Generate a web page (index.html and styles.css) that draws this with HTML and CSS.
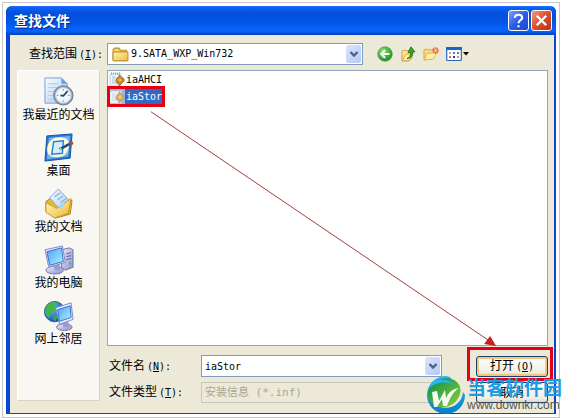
FILE: index.html
```html
<!DOCTYPE html>
<html lang="zh-CN">
<head>
    <meta charset="UTF-8">
    <meta name="viewport" content="width=device-width, initial-scale=1.0">
    <title>查找文件</title>
    <link rel="stylesheet" href="styles.css">
</head>
<body>
    <svg class="defs" width="0" height="0" aria-hidden="true">
        <defs>
            <linearGradient id="g-folder" x1="0" y1="0" x2="1" y2="1">
                <stop offset="0" stop-color="#fff6b8"/><stop offset="1" stop-color="#edb93c"/>
            </linearGradient>
            <linearGradient id="g-screen" x1="0" y1="0" x2="1" y2="1">
                <stop offset="0" stop-color="#4ba0f5"/><stop offset="1" stop-color="#b4f1ff"/>
            </linearGradient>
            <linearGradient id="g-paper" x1="0" y1="0" x2="1" y2="1">
                <stop offset="0" stop-color="#f8fcff"/><stop offset="1" stop-color="#a9cdf4"/>
            </linearGradient>
            <linearGradient id="g-case" x1="0" y1="0" x2="1" y2="1">
                <stop offset="0" stop-color="#eeeefc"/><stop offset="1" stop-color="#8c8cc8"/>
            </linearGradient>
            <radialGradient id="g-green" cx=".35" cy=".3" r=".8">
                <stop offset="0" stop-color="#8be070"/><stop offset="1" stop-color="#168a16"/>
            </radialGradient>
            <radialGradient id="g-globe" cx=".35" cy=".3" r=".8">
                <stop offset="0" stop-color="#6fc0ff"/><stop offset="1" stop-color="#0a3eb0"/>
            </radialGradient>
            <linearGradient id="g-logo" x1="0" y1="0" x2="0" y2="1">
                <stop offset="0" stop-color="#26b6ee"/><stop offset="1" stop-color="#087fc8"/>
            </linearGradient>
            <linearGradient id="g-leaf" x1="0" y1="0" x2="1" y2="1">
                <stop offset="0" stop-color="#078c45"/><stop offset="1" stop-color="#8fcf3c"/>
            </linearGradient>
            <symbol id="inf" viewBox="0 0 16 16">
                <path d="M1 2h11v12H1z" fill="#eef5fb" stroke="#c3d2e2"/>
                <path d="M2 1.500h1m1 0h1m1 0h1m1 0h1m1 0h1" stroke="#b79a55" stroke-width="2"/>
                <path d="M3 5h4M3 7h3M3 9h4M3 11h5" stroke="#a9c4dd"/>
                <path d="M10 3v2l-2 1-1 2 1 3 2 1v2l5-5V7z" fill="#c98b28" stroke="#9a7430"/>
                <circle cx="11" cy="8" r="1.500" fill="#f0c050"/>
            </symbol>
            <symbol id="chevron" viewBox="0 0 10 10">
                <path d="M1.500 3 5 6.500 8.500 3" fill="none" stroke="#4d6185" stroke-width="2.400"/>
            </symbol>
        </defs>
    </svg>

    <div class="page">
        <div class="dialog">
            <header class="titlebar">
                <h1>查找文件</h1>
                <button class="title-btn" aria-label="帮助">
                    <svg viewBox="0 0 18 18"><path d="M5.500 6.500C5.500 2.500 12.500 2.500 12.500 6.500 12.500 9 9 8.500 9 11.500M9 13.500v2" fill="none" stroke="#fff" stroke-width="2"/></svg>
                </button>
                <button class="title-btn close" aria-label="关闭">
                    <svg viewBox="0 0 18 18"><path d="M4.500 4.500l9 9m0-9l-9 9" stroke="#fff" stroke-width="2.200"/></svg>
                </button>
            </header>

            <div class="content">
                <div class="toolbar">
                    <label for="look-in">查找范围<span class="key">(<u>I</u>):</span></label>
                    <div class="combo look-in">
                        <svg class="combo-icon" viewBox="0 0 16 16">
                            <path d="M1 13.500V3.500L2.500 2h4L8 4h5.500v2" fill="#f6d66b" stroke="#b98a22"/>
                            <path d="M1 13.500V6.500L2.500 5.500h12l.500 1v7l-1 .500H2z" fill="url(#g-folder)" stroke="#c1932b"/>
                        </svg>
                        <select id="look-in"><option>9.SATA_WXP_Win732</option></select>
                        <span class="arrow"><svg><use href="#chevron"/></svg></span>
                    </div>
                    <div class="tools">
                        <button aria-label="后退">
                            <svg viewBox="0 0 16 16"><circle cx="8" cy="8" r="7.300" fill="url(#g-green)" stroke="#3d9b35" stroke-width=".6"/><path d="M12.500 8H4.500M8 4.300 4.300 8 8 11.700" fill="none" stroke="#fff" stroke-width="2"/></svg>
                        </button>
                        <button aria-label="向上">
                            <svg viewBox="0 0 16 16"><path d="M2 15V5l3-1 1 1 6-1v8L9 15z" fill="url(#g-folder)" stroke="#cfa23a"/><path d="M2.500 15 5 9l8-2-3 7z" fill="#fff0a0" stroke="#d0a43c" stroke-width=".7"/><path d="M7 12.500c3-1 3.500-3 3.500-6H8L11 .800 15 6h-2.300c0 4-1 6-5.700 6.500z" fill="#35a52b" stroke="#176e18" stroke-width=".8"/></svg>
                        </button>
                        <button aria-label="新建文件夹">
                            <svg viewBox="0 0 16 16"><path d="M1 14V4l2-1 3 1 5-.500V7L9 13z" fill="#f7dc80" stroke="#d5a846"/><path d="M1.500 14 4 7.500l10-1L10.500 13z" fill="#fff0a9" stroke="#d9ad4b" stroke-width=".8"/><path d="M12.500 1v7M9 4.500h7M10 2l5 5m0-5-5 5" stroke="#ed7443" stroke-width="1.300"/><circle cx="12.500" cy="4.500" r="1.200" fill="#ffd2a0"/></svg>
                        </button>
                        <button class="views" aria-label="查看">
                            <svg viewBox="0 0 16 16"><rect x=".7" y="1.500" width="14.600" height="13" rx="1" fill="#fff" stroke="#2865b8" stroke-width="1.200"/><path d="M0 1h16v3H0z" fill="#1765cf"/><path d="M3 6h2v2H3z" fill="#aaa"/><path d="M7 6h2v2H7z" fill="#4b83c5"/><path d="M11 6h2v2h-2z" fill="#339957"/><path d="M3 10h2v2H3z" fill="#e66a42"/><path d="M7 10h2v2H7z" fill="#1c419f"/><path d="M11 10h2v2h-2z" fill="#d49b39"/></svg>
                            <svg class="caret" viewBox="0 0 6 4"><path d="M0 0h6L3 3.500z"/></svg>
                        </button>
                    </div>
                </div>

                <div class="main">
                    <nav class="places">
                        <a href="#">
                            <svg viewBox="0 0 32 32">
                                <path d="M2 2h17l6 6v20H2z" fill="url(#g-paper)" stroke="#769fd6"/>
                                <path d="M19 2v6h6z" fill="#5e9be8"/>
                                <path d="M5 8h11M5 12h13M5 16h9M5 20h7M5 24h8" stroke="#a8caef"/>
                                <circle cx="21" cy="20" r="10" fill="#9ba6b7" stroke="#68758b"/>
                                <circle cx="21" cy="20" r="7.800" fill="#eaf8ff" stroke="#d7dce3"/>
                                <path d="M21 13.500v1.500M21 25v1.500M14.500 20H16M26 20h1.500" stroke="#6686a0"/>
                                <path d="M25.500 15.500 21 20.500l-3-.500" fill="none" stroke="#24435c" stroke-width="1.800"/>
                            </svg>
                            我最近的文档
                        </a>
                        <a href="#">
                            <svg viewBox="0 0 32 32">
                                <path d="M4 4 30 2l-2 25-26 3z" fill="#2877d3" stroke="#1551a4"/>
                                <path d="M6 6 28 4l-2 21-22 3z" fill="#6db7f2"/>
                                <path d="M9 8c5-4 15-3 17 1 2 5 0 12-4 15-6 4-15 2-17-2-2-5 0-11 4-14z" fill="#fff8d8"/>
                                <path d="M11 10 21 9l-1 13-11 1z" fill="#d1f0ff" stroke="#2585cf" stroke-width="1.500"/>
                                <path d="M17 18 28 12" stroke="#194c86" stroke-width="2.500"/>
                                <path d="m15.500 19 3-3 1 2z" fill="#f5dfac"/><circle cx="29" cy="11.500" r="2.200" fill="#b84935"/>
                            </svg>
                            桌面
                        </a>
                        <a href="#">
                            <svg viewBox="0 0 32 32">
                                <path d="m3 14 7-5 20 4-2 14-15 4L3 24z" fill="#e8b733" stroke="#b78422"/>
                                <path d="m7 10 9-9 12 13-9 10z" fill="url(#g-paper)" stroke="#75aedd"/>
                                <path d="m12 9 6-4m-3 7 6-4m-3 7 6-4" stroke="#8ab8e3" stroke-width="1.500"/>
                                <path d="m3 15 11 6L29 11l-3 15-14 5L3 25z" fill="url(#g-folder)" stroke="#c9962c"/>
                                <path d="m15 19 8-5-4 8z" fill="#9ed8f6"/>
                            </svg>
                            我的文档
                        </a>
                        <a href="#">
                            <svg viewBox="0 0 32 32">
                                <path d="m19 6 8-2 4 2v18l-8 3-4-3z" fill="url(#g-case)" stroke="#6f6fac"/>
                                <path d="m24 10 5-1m-5 4 5-1m-5 4 5-1" stroke="#5a5fa0"/><path d="M27 19h2v2h-2z" fill="#42b764"/>
                                <ellipse cx="12" cy="27" rx="9" ry="4" fill="url(#g-case)" stroke="#7777b3"/>
                                <path d="m11 22 6-1 1 6h-6z" fill="#9b9bce"/>
                                <path d="m2 6 18-4 3 17-17 5z" fill="#eeeeff" stroke="#7b88c4"/>
                                <path d="m4 8 15-4 2 14-14 4z" fill="url(#g-screen)" stroke="#2872ce"/>
                            </svg>
                            我的电脑
                        </a>
                        <a href="#">
                            <svg viewBox="0 0 32 32">
                                <circle cx="12" cy="12" r="10.500" fill="url(#g-globe)" stroke="#235cae"/>
                                <path d="M4 6c4-5 9-4 11-3l-3 4 2 3-5 3-3 6c-4-4-5-8-2-13z" fill="#44b548"/>
                                <path d="m11 15 4 1-2 6-3-2z" fill="#3da545"/>
                                <ellipse cx="22" cy="28" rx="8" ry="3.500" fill="url(#g-case)" stroke="#7777b3"/>
                                <path d="m20 23 6-1 1 6h-6z" fill="#9b9bce"/>
                                <path d="m13 8 16-5 2 17-14 5z" fill="#eeeeff" stroke="#7b88c4"/>
                                <path d="m15 10 13-4 1 12-12 4z" fill="url(#g-screen)" stroke="#2872ce"/>
                            </svg>
                            网上邻居
                        </a>
                    </nav>

                    <div class="right">
                        <div class="file-list">
                            <button class="file"><svg><use href="#inf"/></svg><span>iaAHCI</span></button>
                            <button class="file selected"><svg><use href="#inf"/></svg><span>iaStor</span></button>
                            <svg class="pointer" viewBox="0 0 440 276" preserveAspectRatio="none">
                                <path d="M43 41 381 271" stroke="#a83a3a" fill="none"/>
                                <path d="m389 277-12-2 6-8z" fill="#c8201c"/>
                            </svg>
                        </div>

                        <form class="fields">
                            <label for="file-name">文件名<span class="key">(<u>N</u>):</span></label>
                            <div class="combo">
                                <input id="file-name" type="text" value="iaStor">
                                <span class="arrow"><svg><use href="#chevron"/></svg></span>
                            </div>
                            <button class="btn open" type="button">打开<span class="key">(<u>O</u>)</span></button>

                            <label for="file-type">文件类型<span class="key">(<u>T</u>):</span></label>
                            <div class="combo disabled">
                                <select id="file-type" disabled><option>安装信息 (*.inf)</option></select>
                            </div>
                            <button class="btn" type="button">取消</button>
                        </form>
                    </div>
                </div>
            </div>
        </div>

        <div class="watermark">
            <svg viewBox="0 0 38 38">
                <path d="M19 0a19 19 0 1 0 19 19l-2-3C35 29 22 35 10 30 24 31 33 23 32 12L23 1z" fill="url(#g-logo)"/>
                <path d="M2 14C5 5 17-1 27 4c10 5 8 19-3 25-5 3-10 3-14 1C3 27-1 21 2 14z" fill="url(#g-leaf)"/>
                <path d="M1 13c7-7 19-9 27-3C20 1 7 1 1 13z" fill="#26b6ee"/>
                <path d="m5 16 5-1 2 10 6-11 1 8c4-8 8-9 13-10-6 4-9 10-12 18h-4l-1-7-5 8H7z" fill="#f6fbef"/>
            </svg>
            <div class="brand">
                <strong>当客软件园</strong>
                <span>www.downkr.com</span>
            </div>
        </div>
    </div>
</body>
</html>
```

FILE: styles.css
```css
* {
    box-sizing: border-box;
}
body {
    margin: 0;
    background: #fff;
    color: #000;
    font-family: "DejaVu Sans Mono", "Noto Sans CJK SC", monospace;
    font-size: 12px;
    line-height: 16px;
}
button, input, select {
    font: inherit;
    color: inherit;
    margin: 0;
    padding: 0;
    border: none;
    background: none;
}
svg {
    display: block;
    flex: none;
}
.defs {
    position: absolute;
}
.page {
    position: relative;
    display: flex;
    min-height: 100vh;
    padding: 2px 2px 1px;
}
.page::before {
    content: "";
    position: absolute;
    inset: 2px 2px 1px;
    border: 1px solid #c8c8c8;
}
.dialog {
    flex: 1;
    display: flex;
    flex-direction: column;
    margin: 4px;
    border: 2px solid #0a46d2;
    border-width: 0 2px 1px 4px;
    border-radius: 6px 6px 0 0;
    background: #ece9d8;
}

/* title bar */
.titlebar {
    display: flex;
    align-items: center;
    gap: 2px;
    height: 29px;
    margin: 0 -2px 0 -4px;
    padding: 0 4px 0 8px;
    border-radius: 6px 6px 0 0;
    background: linear-gradient(#1c6cf0, #0a5cf0 10%, #0350dc 25%, #0255e6 55%, #0663fc 80%, #0560f4 88%, #0340c0);
}
.titlebar h1 {
    flex: 1;
    margin: 0;
    font-size: 14px;
    font-weight: bold;
    color: #fff;
    text-shadow: 1px 1px 1px #0a1f80;
}
.title-btn {
    width: 21px;
    height: 21px;
    border: 1px solid #fff;
    border-radius: 3px;
    background: linear-gradient(135deg, #7ba0f8, #2a5ce8 50%, #1c48cc);
}
.title-btn svg {
    width: 19px;
    height: 19px;
}
.title-btn.close {
    background: linear-gradient(135deg, #f09a80, #de4c28 50%, #b83410);
}

/* toolbar */
.content {
    flex: 1;
    display: flex;
    flex-direction: column;
    gap: 5px;
    padding: 8px 6px 10px 7px;
}
.toolbar {
    display: flex;
    align-items: center;
}
.toolbar label {
    width: 90px;
    padding-left: 12px;
}
.key {
    margin-left: 2px;
    font-size: 10px;
}
.combo {
    display: flex;
    align-items: center;
    min-width: 0;
    height: 22px;
    padding: 1px;
    border: 1px solid #7f9db9;
    background: #fff;
    font-size: 10px;
}
.combo select, .combo input {
    flex: 1;
    min-width: 0;
    height: 18px;
    padding: 0 2px;
    appearance: none;
    outline: none;
}
.look-in {
    flex: 1;
}
.combo-icon {
    width: 17px;
    height: 17px;
    margin-left: 3px;
}
.arrow {
    display: flex;
    align-items: center;
    justify-content: center;
    width: 15px;
    height: 18px;
    border-radius: 2px;
    background: linear-gradient(135deg, #dbe6fe, #b4c8f6);
    pointer-events: none;
}
.arrow svg {
    width: 10px;
    height: 10px;
}
.tools {
    width: 185px;
    display: flex;
    gap: 7px;
    padding-left: 14px;
}
.tools svg {
    width: 16px;
    height: 16px;
}
.views {
    display: flex;
    align-items: center;
    gap: 1px;
}
.tools .caret {
    width: 6px;
    height: 4px;
}

/* places bar */
.main {
    flex: 1;
    display: flex;
    gap: 7px;
}
.places {
    width: 83px;
    margin-bottom: 2px;
    padding-top: 5px;
    border: 1px solid #fff;
    border-right-color: #d8d4c4;
    border-bottom-color: #d8d4c4;
    background: #f8f7f2;
}
.places a {
    display: flex;
    flex-direction: column;
    align-items: center;
    height: 56px;
    color: #000;
    text-decoration: none;
    white-space: nowrap;
}
.places svg {
    width: 31px;
    height: 31px;
}

/* file list */
.right {
    flex: 1;
    display: flex;
    flex-direction: column;
    gap: 9px;
    min-width: 0;
}
.file-list {
    position: relative;
    flex: 1;
    display: flex;
    flex-direction: column;
    align-items: flex-start;
    padding: 0 1px;
    border: 1px solid #8fa8bd;
    background: #fff;
}
.file {
    position: relative;
    display: flex;
    align-items: center;
    height: 17px;
    font-size: 10px;
}
.file svg {
    width: 16px;
    height: 16px;
}
.file span {
    padding: 0 1px;
}
.file.selected span {
    background: #316ac5;
    color: #fff;
}
.file.selected svg {
    background: #7799d4;
    opacity: 0.7;
}
.file.selected::after {
    content: "";
    position: absolute;
    inset: -2px;
    border: 3px solid #e60012;
}
.pointer {
    position: absolute;
    inset: 0;
    width: 100%;
    height: 100%;
    overflow: visible;
    pointer-events: none;
}

/* file name, file type and buttons */
.fields {
    display: grid;
    grid-template-columns: 92px 1fr 72px;
    gap: 5px 0;
    align-items: center;
}
.fields label {
    padding-left: 2px;
}
.fields .combo {
    margin: 0 34px 0 2px;
}
.combo.disabled {
    height: 21px;
    border-color: #c9c7ba;
    background: #ece9d8;
}
.combo.disabled select {
    color: #a8a594;
    font-size: 11px;
    opacity: 1;
}
.btn {
    position: relative;
    height: 21px;
    border: 1px solid #1c4070;
    border-radius: 3px;
    background: linear-gradient(#fff, #f0eee4 80%, #dcd6c6);
}
.btn.open {
    box-shadow: inset 0 0 0 2px #f0c878;
}
.btn.open::after {
    content: "";
    position: absolute;
    inset: -10px -6px -5px -10px;
    border: 3px solid #e60012;
}

/* site mark in the corner */
.watermark {
    position: absolute;
    right: 0;
    bottom: 5px;
    display: flex;
    align-items: center;
    gap: 2px;
    font-family: "Liberation Sans", "Noto Sans CJK SC", sans-serif;
    white-space: nowrap;
}
.watermark svg {
    width: 38px;
    height: 38px;
}
.brand {
    display: flex;
    flex-direction: column;
}
.brand strong {
    font-size: 19px;
    line-height: 20px;
    color: #1b9de4;
}
.brand span {
    font-size: 12px;
    line-height: 12px;
    color: #555;
}
```
